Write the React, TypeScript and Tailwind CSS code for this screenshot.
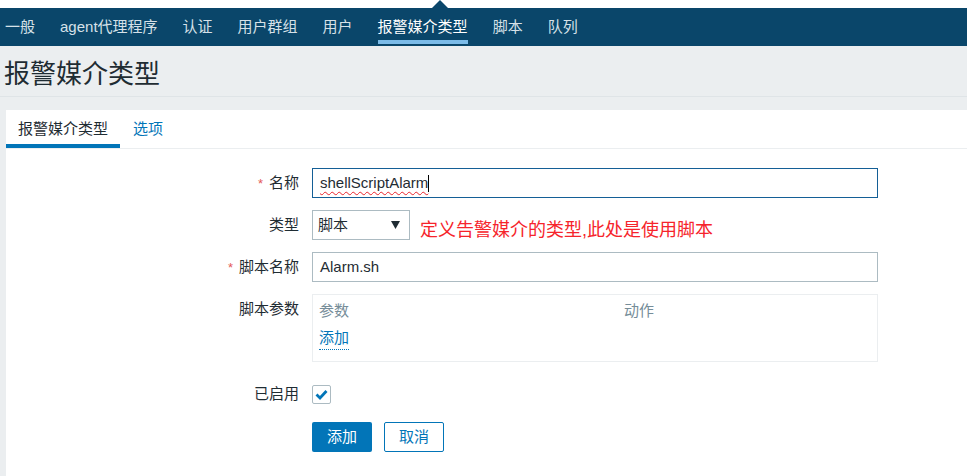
import React from 'react';

const navItems = ['一般', 'agent代理程序', '认证', '用户群组', '用户', '报警媒介类型', '脚本', '队列'];

const FormRow: React.FC<{ label: string; required?: boolean; className?: string; children: React.ReactNode }> = ({
  label,
  required,
  className = '',
  children,
}) => (
  <div className={`flex items-start ${className}`}>
    <div className="w-[293px] h-[30px] flex items-center justify-end text-[15px] text-[#1f2c33]">
      {required && <span className="text-[#e45959] mr-[6px] text-[13px] leading-none">*</span>}
      {label}
    </div>
    <div className="ml-[13px] flex items-start">{children}</div>
  </div>
);

const App: React.FC = () => {
  return (
    <div className="min-h-[476px] w-full bg-[#ebeef0] font-['Liberation_Sans','Noto_Sans_CJK_SC',sans-serif] overflow-hidden">
      {/* top strip with pointer */}
      <div className="h-2 bg-white flex items-end">
        <svg className="ml-[432px]" width="16" height="8" viewBox="0 0 16 8">
          <polygon points="0,8 8,0 16,8" fill="#0a466a" />
        </svg>
      </div>

      {/* nav */}
      <nav className="h-[38px] bg-[#0a466a] flex pl-[5px] gap-[25px]">
        {navItems.map((item) => {
          const active = item === '报警媒介类型';
          return (
            <div key={item} className="flex flex-col h-full">
              <div
                className={`h-[32px] pt-[6px] flex items-center text-[15px] leading-[20px] whitespace-nowrap ${
                  active ? 'text-white' : 'text-[#d6e1e8]'
                }`}
              >
                {item}
              </div>
              <div className={`h-1 ${active ? 'bg-[#7bbbe8]' : 'bg-transparent'}`} />
            </div>
          );
        })}
      </nav>

      {/* page header */}
      <div className="h-[51px] border-b border-[#dfe4e7] flex items-center pt-[6px] pl-[4px]">
        <h1 className="text-[26px] leading-[32px] text-[#1f2c33] font-normal">报警媒介类型</h1>
      </div>

      {/* card */}
      <div className="mt-[13px] ml-[6px] bg-white min-h-[370px]">
        {/* tabs */}
        <div className="h-[39px] flex border-b border-[#ebeef0]">
          <div className="flex flex-col w-[114px]">
            <div className="h-[34px] pt-1 flex items-center justify-center text-[15px] text-[#1f2c33]">报警媒介类型</div>
            <div className="h-1 bg-[#0275b8]" />
          </div>
          <div className="flex flex-col px-[13px]">
            <div className="h-[34px] pt-1 flex items-center text-[15px] text-[#0275b8]">选项</div>
          </div>
        </div>

        {/* form */}
        <div className="flex flex-col pb-6">
          <FormRow label="名称" required className="mt-[19px]">
            <div className="w-[566px] h-[30px] border border-[#145f96] flex items-center pl-[7px] text-[15px] text-[#1f2c33]">
              <span className="underline decoration-wavy decoration-[#e8232b] decoration-1 underline-offset-[3px]">
                shellScriptAlarm
              </span>
              <span className="inline-block w-px h-[17px] bg-black" />
            </div>
          </FormRow>

          <FormRow label="类型" className="mt-[12px]">
            <div className="w-[98px] h-[30px] border border-[#acbbc2] flex items-center justify-between pl-[5px] pr-[9px] text-[15px] text-[#1f2c33]">
              <span>脚本</span>
              <svg width="9" height="8" viewBox="0 0 9 8">
                <polygon points="0,0 9,0 4.5,8" fill="#1f2c33" />
              </svg>
            </div>
            <div className="ml-[10px] mt-[10px] h-[20px] text-[18px] leading-[20px] text-[#f6242b] whitespace-nowrap">
              定义告警媒介的类型,此处是使用脚本
            </div>
          </FormRow>

          <FormRow label="脚本名称" required className="mt-[12px]">
            <div className="w-[566px] h-[30px] border border-[#acbbc2] flex items-center pl-[7px] text-[15px] text-[#1f2c33]">
              Alarm.sh
            </div>
          </FormRow>

          <FormRow label="脚本参数" className="mt-[12px]">
            <div className="w-[566px] h-[68px] border border-[#ebeef0] pl-[6px] pt-[6px] text-[15px]">
              <div className="grid grid-cols-[305px_1fr] leading-[20px] text-[#768d99]">
                <span>参数</span>
                <span>动作</span>
              </div>
              <div className="mt-[6px] leading-[20px]">
                <span className="text-[#0275b8] border-b border-dotted border-[#0275b8] inline-block leading-[22px]">
                  添加
                </span>
              </div>
            </div>
          </FormRow>

          <FormRow label="已启用" className="mt-[17px]">
            <div className="h-[30px] flex items-center">
              <div className="w-[19px] h-[19px] border border-[#acbbc2] rounded-[2px] flex items-center justify-center bg-white">
                <svg width="13" height="11" viewBox="0 0 13 11">
                  <path d="M1.5 5.5 L5 9 L11.5 2" fill="none" stroke="#0275b8" strokeWidth="2.8" />
                </svg>
              </div>
            </div>
          </FormRow>

          <div className="mt-[13px] ml-[306px] flex gap-3">
            <button className="w-[60px] h-[30px] bg-[#0275b8] text-white text-[15px] rounded-[2px]">添加</button>
            <button className="w-[60px] h-[30px] bg-white border border-[#0275b8] text-[#0275b8] text-[15px] rounded-[2px]">
              取消
            </button>
          </div>
        </div>
      </div>
    </div>
  );
};

export default App;
